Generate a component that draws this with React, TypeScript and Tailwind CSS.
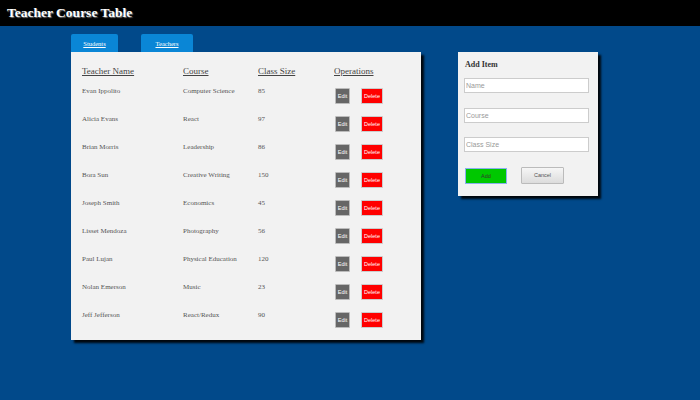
import React from 'react';

const rows = [
  { name: 'Evan Ippolito', course: 'Computer Science', size: '85' },
  { name: 'Alicia Evans', course: 'React', size: '97' },
  { name: 'Brian Morris', course: 'Leadership', size: '86' },
  { name: 'Bora Sun', course: 'Creative Writing', size: '150' },
  { name: 'Joseph Smith', course: 'Economics', size: '45' },
  { name: 'Lisset Mendoza', course: 'Photography', size: '56' },
  { name: 'Paul Lujan', course: 'Physical Education', size: '120' },
  { name: 'Nolan Emerson', course: 'Music', size: '23' },
  { name: 'Jeff Jefferson', course: 'React/Redux', size: '90' },
];

const serif = "font-['Liberation_Serif',serif]";
const sans = "font-['Liberation_Sans',Arial,sans-serif]";

export default function App() {
  return (
    <div className="min-h-[400px] w-full bg-[#01498a]">
      <header className="h-[26px] bg-black pl-[7px] flex items-center">
        <h1 className={`${serif} text-white font-bold text-[13.5px] leading-none [text-shadow:1px_1px_1px_#777]`}>
          Teacher Course Table
        </h1>
      </header>

      <div className="flex items-start pl-[71px] pt-[8px]">
        <div className="flex flex-col">
          {/* tabs */}
          <div className="flex gap-[23px] h-[18px]">
            <a className={`${serif} w-[47px] h-[18px] bg-[#0a86d6] rounded-t-[2px] text-white underline text-[6.5px] flex items-center justify-center pt-[2px]`}>
              Students
            </a>
            <a className={`${serif} w-[52px] h-[18px] bg-[#0a86d6] rounded-t-[2px] text-white underline text-[6.5px] flex items-center justify-center pt-[2px]`}>
              Teachers
            </a>
          </div>

          {/* table panel */}
          <div className="w-[350px] bg-[#f2f2f2] pt-[12px] pb-[3px] pl-[11px] shadow-[3px_3px_2px_rgba(0,0,0,0.9)]">
            <div className={`${serif} grid grid-cols-[101px_75px_76px_1fr] h-[14px] text-[9px] leading-[14px] text-[#444] mb-[7px]`}>
              <span className="underline">Teacher Name</span>
              <span className="underline">Course</span>
              <span className="underline">Class Size</span>
              <span className="underline">Operations</span>
            </div>
            {rows.map((r) => (
              <div key={r.name} className="grid grid-cols-[101px_75px_76px_1fr] h-[28px] items-start">
                <span className={`${serif} text-[7px] leading-[13px] text-[#555]`}>{r.name}</span>
                <span className={`${serif} text-[7px] leading-[13px] text-[#555]`}>{r.course}</span>
                <span className={`${serif} text-[7px] leading-[13px] text-[#555]`}>{r.size}</span>
                <div className="flex gap-[11px] mt-[3px] pl-[1px]">
                  <button className={`${sans} w-[15px] h-[16px] bg-[#666] text-white text-[5.5px] rounded-[1px] border border-[#bbb] flex items-center justify-center`}>
                    Edit
                  </button>
                  <button className={`${sans} w-[22px] h-[16px] bg-[#ff0000] text-white text-[5.5px] rounded-[1px] border border-[#ccc] flex items-center justify-center`}>
                    Delete
                  </button>
                </div>
              </div>
            ))}
          </div>
        </div>

        {/* add form */}
        <div className="ml-[37px] mt-[18px] w-[140px] h-[144px] bg-[#f2f2f2] pl-[6px] pt-[8px] shadow-[3px_3px_2px_rgba(0,0,0,0.9)]">
          <h2 className={`${serif} font-bold text-[8px] leading-[10px] text-[#333] pl-[1px]`}>Add Item</h2>
          <div className="flex flex-col gap-[14.5px] mt-[8px]">
            {['Name', 'Course', 'Class Size'].map((p) => (
              <input
                key={p}
                placeholder={p}
                className={`${sans} w-[125px] h-[15px] bg-white border border-[#ccc] text-[7px] px-[1px] placeholder:text-[#999] outline-none`}
              />
            ))}
          </div>
          <div className="flex items-start gap-[14px] mt-[15px] pl-[1px]">
            <button className={`${sans} mt-[1px] w-[42px] h-[16px] bg-[#00c800] border border-[#8ab0ee] text-[5.5px] text-[#333] flex items-center justify-center`}>
              Add
            </button>
            <button className={`${sans} w-[43px] h-[17px] bg-gradient-to-b from-[#f6f6f6] to-[#dcdcdc] border border-[#bbb] text-[5.5px] text-[#555] rounded-[1px] flex items-center justify-center`}>
              Cancel
            </button>
          </div>
        </div>
      </div>
    </div>
  );
}
